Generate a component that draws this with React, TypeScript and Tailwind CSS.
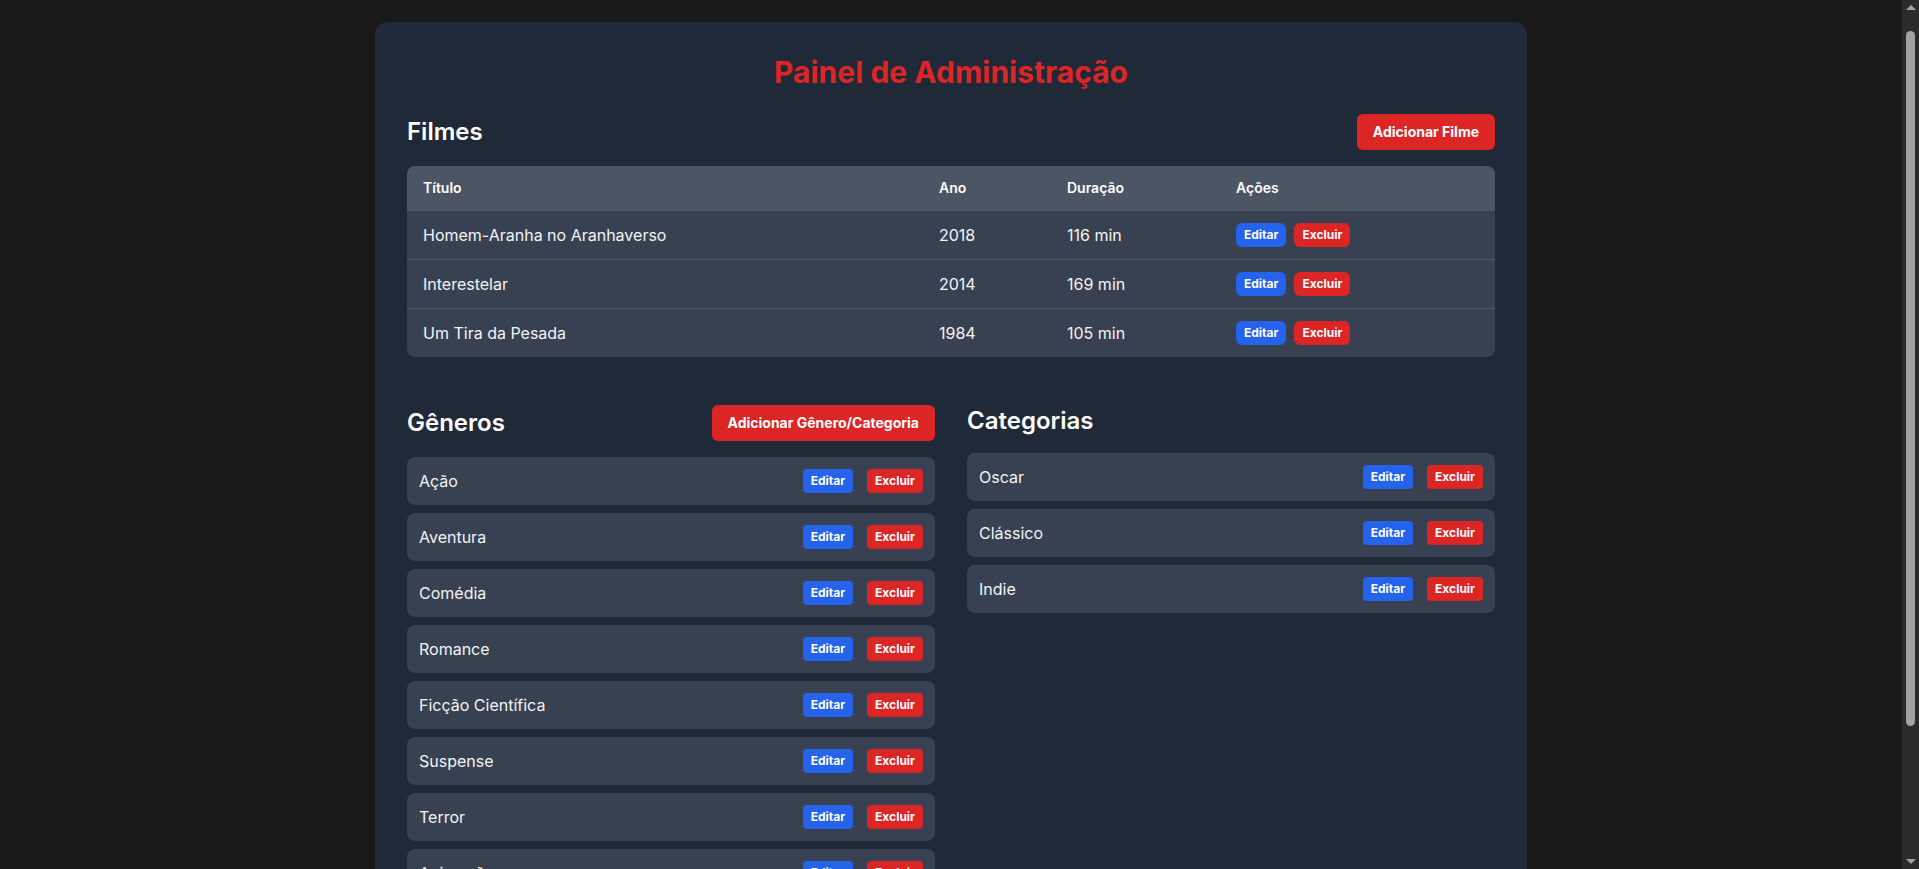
const filmes = [
  { id: 1, titulo: 'Homem-Aranha no Aranhaverso', ano: 2018, duracao: 116 },
  { id: 2, titulo: 'Interestelar', ano: 2014, duracao: 169 },
  { id: 3, titulo: 'Um Tira da Pesada', ano: 1984, duracao: 105 },
];

const generos = [
  'Ação',
  'Aventura',
  'Comédia',
  'Romance',
  'Ficção Científica',
  'Suspense',
  'Terror',
  'Animação',
  'Drama',
  'Fantasia',
];

const categorias = ['Oscar', 'Clássico', 'Indie'];

function ItemRow({ nome }: { nome: string }) {
  return (
    <div className="flex items-center justify-between bg-[#374151] rounded-lg p-3">
      <span className="text-[#f3f4f6]">{nome}</span>
      <div className="flex gap-3.5">
        <button className="bg-[#2563eb] text-white text-xs font-bold px-2 py-1 rounded">Editar</button>
        <button className="bg-[#dc2626] text-white text-xs font-bold px-2 py-1 rounded">Excluir</button>
      </div>
    </div>
  );
}

// dark page scrollbar, as the browser draws it
function Scrollbar() {
  return (
    <aside className="w-[17px] shrink-0 h-full bg-[#2b2b2b] flex flex-col items-center">
      <div className="h-[15px] flex items-center justify-center">
        <div className="w-0 h-0 border-l-[5px] border-r-[5px] border-b-[5px] border-l-transparent border-r-transparent border-b-[#a3a3a3]" />
      </div>
      <div className="flex-1 w-full px-[4px] pt-[16px]">
        <div className="w-full h-[695px] bg-[#a3a3a3] rounded-full" />
      </div>
      <div className="h-[15px] flex items-center justify-center">
        <div className="w-0 h-0 border-l-[5px] border-r-[5px] border-t-[5px] border-l-transparent border-r-transparent border-t-[#a3a3a3]" />
      </div>
    </aside>
  );
}

export default function App() {
  return (
    <div className="h-screen flex bg-[#1a1a1a] font-['Inter',sans-serif]">
      <main className="flex-1 overflow-y-auto pt-[22px] pb-[22px]">
        <div className="max-w-6xl mx-auto bg-[#1f2937] rounded-xl p-8 shadow-lg">
          <h1 className="text-3xl font-bold text-center text-[#dc2626] mb-6">Painel de Administração</h1>

          {/* Filmes */}
          <section className="mb-12">
            <div className="flex items-center justify-between mb-4">
              <h2 className="text-2xl font-semibold text-white">Filmes</h2>
              <button className="bg-[#dc2626] text-white text-sm font-bold px-4 py-2 rounded-md">Adicionar Filme</button>
            </div>
            <div className="rounded-lg overflow-hidden">
              <table className="w-full text-left">
                <thead className="bg-[#4b5563]">
                  <tr className="text-sm text-white">
                    <th className="w-[516px] px-4 py-3 font-semibold">Título</th>
                    <th className="w-[128px] px-4 py-3 font-semibold">Ano</th>
                    <th className="w-[169px] px-4 py-3 font-semibold">Duração</th>
                    <th className="px-4 py-3 font-semibold">Ações</th>
                  </tr>
                </thead>
                <tbody className="bg-[#374151] text-[#f3f4f6]">
                  {filmes.map((f) => (
                    <tr key={f.id} className="border-t border-[#4b5563]">
                      <td className="px-4 py-3">{f.titulo}</td>
                      <td className="px-4 py-3">{f.ano}</td>
                      <td className="px-4 py-3">{f.duracao} min</td>
                      <td className="px-4 py-3">
                        <div className="flex gap-2">
                          <button className="bg-[#2563eb] text-white text-xs font-bold px-2 py-1 rounded-md">Editar</button>
                          <button className="bg-[#dc2626] text-white text-xs font-bold px-2 py-1 rounded-md">Excluir</button>
                        </div>
                      </td>
                    </tr>
                  ))}
                </tbody>
              </table>
            </div>
          </section>

          {/* Gêneros e Categorias */}
          <div className="grid grid-cols-2 gap-8">
            <section>
              <div className="flex items-center justify-between mb-4">
                <h2 className="text-2xl font-semibold text-white">Gêneros</h2>
                <button className="bg-[#dc2626] text-white text-sm font-bold px-4 py-2 rounded-md">
                  Adicionar Gênero/Categoria
                </button>
              </div>
              <div className="flex flex-col gap-2">
                {generos.map((g) => (
                  <ItemRow key={g} nome={g} />
                ))}
              </div>
            </section>

            <section>
              <h2 className="text-2xl font-semibold text-white mb-4">Categorias</h2>
              <div className="flex flex-col gap-2">
                {categorias.map((c) => (
                  <ItemRow key={c} nome={c} />
                ))}
              </div>
            </section>
          </div>
        </div>
      </main>
      <Scrollbar />
    </div>
  );
}
